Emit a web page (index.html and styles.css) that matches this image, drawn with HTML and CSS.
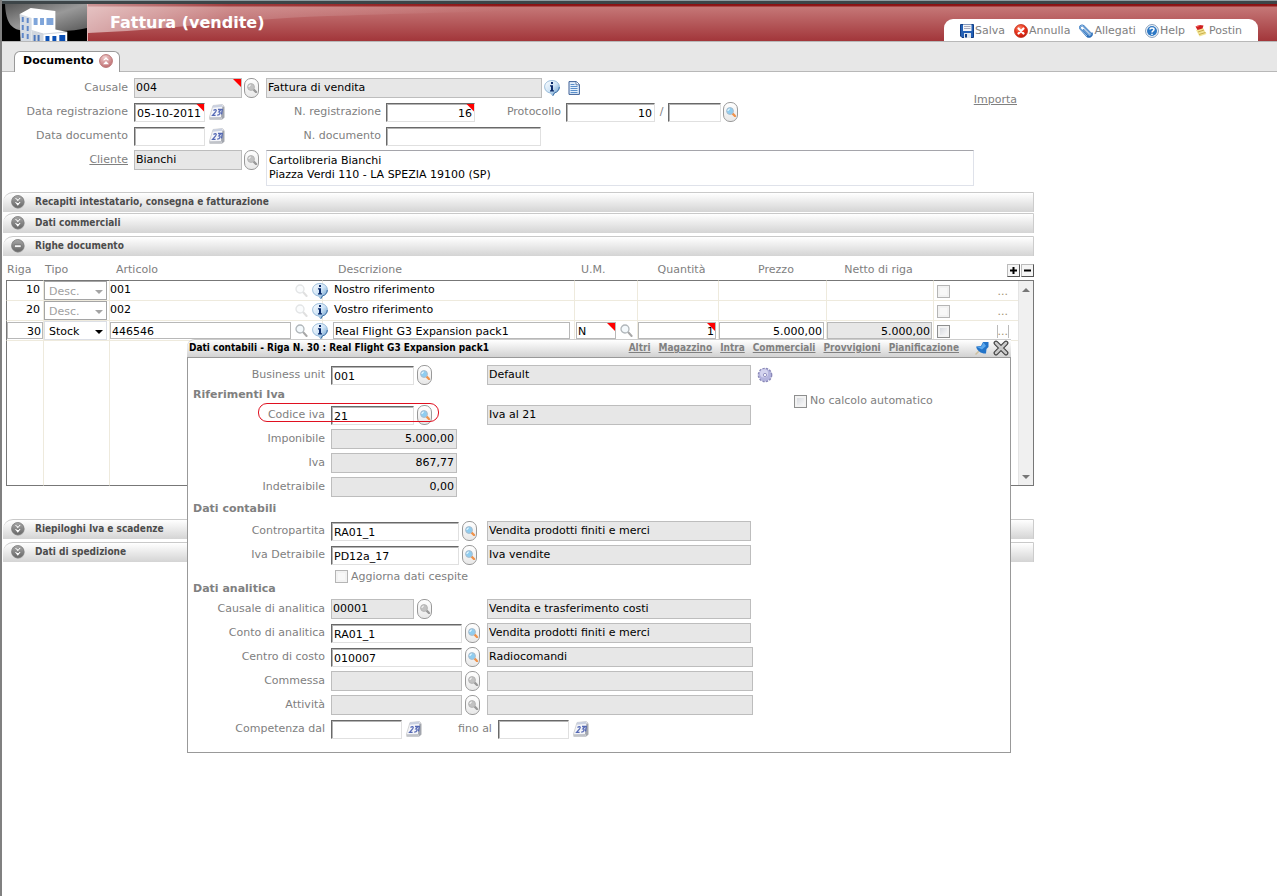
FILE: index.html
```html
<!DOCTYPE html>
<html lang="it">
<head>
<meta charset="utf-8">
<title>Fattura (vendite)</title>
<link rel="stylesheet" href="styles.css">
</head>
<body>
<svg class="sprite" aria-hidden="true">
  <defs>
    <linearGradient id="gInfo" x1="0" y1="0" x2="1" y2="1"><stop offset="0" stop-color="#fff"/><stop offset=".5" stop-color="#cfe4f6"/><stop offset="1" stop-color="#5d95c8"/></linearGradient>
    <linearGradient id="gDisc" x1="0" y1="0" x2="0" y2="1"><stop offset="0" stop-color="#a8a8a8"/><stop offset="1" stop-color="#666"/></linearGradient>
    <radialGradient id="gRed" cx=".4" cy=".3" r=".8"><stop offset="0" stop-color="#ff8a6a"/><stop offset=".5" stop-color="#e8301a"/><stop offset="1" stop-color="#b41408"/></radialGradient>
    <radialGradient id="gRose" cx=".4" cy=".2" r=".9"><stop offset="0" stop-color="#f0cccc"/><stop offset="1" stop-color="#bb6468"/></radialGradient>
  </defs>
  <symbol id="lens" viewBox="0 0 10 10"><path d="M6 6l3 3" stroke="#f0924a" stroke-width="2.4" stroke-linecap="round"/><circle cx="4" cy="4" r="3.4" fill="#8fcdf0" stroke="#a9bccd"/><path d="M2 4a2 2 0 0 1 2-2" stroke="#e6f7ff" stroke-width="1.2" fill="none"/></symbol>
  <symbol id="lens-off" viewBox="0 0 10 10"><path d="M6 6l3 3" stroke="#999" stroke-width="2.4" stroke-linecap="round"/><circle cx="4" cy="4" r="3.4" fill="#c2c2c2" stroke="#b5b5b5"/><path d="M2 4a2 2 0 0 1 2-2" stroke="#f2f2f2" stroke-width="1.2" fill="none"/></symbol>
  <symbol id="find" viewBox="0 0 13 13"><path d="M8 8l3.6 4" stroke="#a8a8a8" stroke-width="2" stroke-linecap="round"/><circle cx="5" cy="5" r="4" fill="#f4f9fc" stroke="#b0b6ba" stroke-width="1.3"/></symbol>
  <symbol id="info" viewBox="0 0 16 16"><path d="M8 .5c4.300 0 7.400 2.700 7.400 6.300 0 3-2 5.300-4.900 6L9 15.700 6.300 13C3 12.500.6 10.100.6 6.800.6 3.200 3.700.5 8 .5z" fill="url(#gInfo)" stroke="#86aed2" stroke-width=".8"/><path d="M15.300 7c0 3-2 5.200-4.800 5.800L9 15.600" fill="none" stroke="#3a6da5" stroke-width="1"/><path d="M7 2h2v2H7zM6 5.200h3v5h1V11.400H6v-1.200h1V6.400H6z" fill="#0b2a6b"/></symbol>
  <symbol id="doc" viewBox="0 0 12 14"><path d="M1 .6h7.500L11.400 3.500v9.900H1z" fill="#e3effb" stroke="#3c5f96"/><path d="M8 .6v3.200h3.400" fill="#fff" stroke="#3c5f96" stroke-width=".8"/><path d="M2.500 3.500h4M2.500 5.500h7M2.500 7.500h7M2.500 9.500h7M2.500 11.500h7" stroke="#5b8fca"/></symbol>
  <symbol id="cal" viewBox="0 0 16 16"><path d="M4 1.500l9.500-1L15 2v11.500L13 15.500H.8L.5 13z" fill="#f4f5f9" stroke="#ccc" stroke-width=".8"/><path d="M13.500 2L15.300 3v10.500L13 15.500l-1-3z" fill="#a2a6ae"/><path d="M.8 15.500L.6 13.300l11.600-.3.600 2.500z" fill="#c0c3c9"/><path d="M4 1.500l9.300-1 .3 2.200-10.200 1z" fill="#c9d0e0"/><path d="M4.500 6.500C6.800 4.600 8 6 6.600 7.800L3.600 11.300h3M9 5.500h3L10 7.800c2 0 1.200 3.300-1.800 3.300M13.400 5l-.9 5.500" fill="none" stroke="#5468b4" stroke-width="1.300"/></symbol>
  <symbol id="open" viewBox="0 0 14 14"><circle cx="7.400" cy="7.600" r="6.200" fill="#bbb"/><circle cx="6.800" cy="6.700" r="6.200" fill="url(#gDisc)" stroke="#777" stroke-width=".8"/><path d="M4 3h1.500v1.200h2.600V3h1.500L6.800 6.300zM4 7h1.500v1h2.600V7h1.500L6.800 10.700z" fill="#fff"/></symbol>
  <symbol id="shut" viewBox="0 0 14 14"><circle cx="7.400" cy="7.600" r="6.200" fill="#bbb"/><circle cx="6.800" cy="6.700" r="6.200" fill="url(#gDisc)" stroke="#777" stroke-width=".8"/><path d="M3.500 6h6.600v2.400H3.500z" fill="#fff" stroke="#555" stroke-width=".5"/></symbol>
  <symbol id="up" viewBox="0 0 14 14"><circle cx="7" cy="7" r="6.400" fill="url(#gRose)" stroke="#b77"/><path d="M7 3l3 3.200H8.500L7 5.200 5.500 6.200H4zM7 7l3 3.200H4z" fill="#fff"/></symbol>
  <symbol id="gear" viewBox="0 0 15 15"><circle cx="7.500" cy="7.500" r="6" fill="#b9b9e0" stroke="#8a88b8" stroke-width="1.800" stroke-dasharray="2.100 1.050"/><circle cx="7.500" cy="7.500" r="5.600" fill="#b4b4de"/><circle cx="6.600" cy="6" r="3.800" fill="#d4d4ef"/><circle cx="7.500" cy="7.500" r="1.500" fill="#fff" stroke="#8886b8" stroke-width=".8"/></symbol>
</svg>

<header class="banner">
  <div class="logo">
    <svg viewBox="0 0 86 37" preserveAspectRatio="none" aria-hidden="true">
      <defs><linearGradient id="gLogo" x1="0" y1="0" x2="1" y2="1"><stop offset="0" stop-color="#555"/><stop offset=".5" stop-color="#999"/><stop offset="1" stop-color="#5a5a5a"/></linearGradient></defs>
      <path d="M0 0h86v37H0z" fill="#000"/>
      <path d="M3 0H86v24c-8 2-17 3-27 3H23C10 26 4 20 3 0z" fill="url(#gLogo)"/>
      <path d="M18 10l11-6 25 3v30H19z" fill="#fff"/><path d="M18 10l12 4v23H19z" fill="#d5dbe3"/>
      <path d="M30 27l12-4 24 5v9H30z" fill="#fff"/><path d="M30 27l12 3v7H30z" fill="#d0d6de"/><path d="M30 26.500L42 30l24-2" fill="none" stroke="#b9c1cc" stroke-width=".7"/>
      <path d="M32 14h4v7h-4zM38.500 14h4v7h-4zM45 14h7v7h-7z" fill="#7fa5da"/>
      <path d="M20 13h2v5h-2zM25 14h2v5h-2zM20 21h2v5h-2zM25 22h2v5h-2zM20 29h2v5h-2zM25 30h2v5h-2z" fill="#5f87c8"/>
      <path d="M44 32h4v5h-4zM51 32h4v5h-4zM58 31h6v6h-6z" fill="#0a4fb5"/><path d="M32 31h2v6h-2zM36 31h2v6h-2z" fill="#4b76bb"/>
    </svg>
  </div>
  <svg class="gloss" viewBox="0 0 1189 37" preserveAspectRatio="none" aria-hidden="true">
    <defs><linearGradient id="gGloss" x1="0" y1="0" x2="1" y2="0"><stop offset="0" stop-color="#fff" stop-opacity=".55"/><stop offset=".2" stop-color="#fff" stop-opacity=".18"/><stop offset=".6" stop-color="#fff" stop-opacity="0"/></linearGradient></defs>
    <path d="M0 0H700C480 6 350 8 240 12 150 15 70 27 0 29z" fill="url(#gGloss)"/>
  </svg>
  <h1>Fattura (vendite)</h1>
  <nav class="tools">
    <a href="#"><svg viewBox="0 0 14 14"><path d="M.5.500h13v13H2l-1.500-1.500z" fill="#2460b5" stroke="#123f86"/><path d="M3 .5h8.500v6.500H3z" fill="#f2f4f7"/><path d="M4 2.500h6.500M4 4.500h6.500" stroke="#aab"/><path d="M4 9h7v5H4z" fill="#dfe6ee"/><path d="M5 10h2v3.500H5z" fill="#123f86"/></svg>Salva</a>
    <a href="#"><svg viewBox="0 0 14 14"><circle cx="7" cy="7" r="6.500" fill="url(#gRed)" stroke="#c2321c" stroke-width=".8"/><path d="M4.500 4.500l5 5M9.500 4.500l-5 5" stroke="#fff" stroke-width="2.200" stroke-linecap="round"/></svg>Annulla</a>
    <a href="#"><svg viewBox="0 0 14 14"><path d="M4 5.500l5.500 5.500c1.500 1.300 3.200-.4 2-1.900L4.500 2C2.500.4-.2 3 1.500 5l6.500 7c2.500 2.300 6-.6 4.600-3.200" fill="none" stroke="#2f6fb8" stroke-width="1.800"/><path d="M4 5.500l5.500 5.500c1.500 1.300 3.200-.4 2-1.900L4.500 2C2.500.4-.2 3 1.500 5l6.500 7" fill="none" stroke="#a5cdf0" stroke-width=".9"/></svg>Allegati</a>
    <a href="#"><svg viewBox="0 0 14 14"><circle cx="7" cy="7" r="6.400" fill="#fff" stroke="#7d98b8"/><circle cx="7" cy="7" r="5" fill="#2d78c4"/><path d="M5 5.500C5 3.400 9 3.400 9 5.500 9 7 7 6.800 7 8.500M7 9.700v1.200" stroke="#fff" stroke-width="1.500" fill="none"/></svg>Help</a>
    <a href="#"><svg viewBox="0 0 14 14"><path d="M2 6l7-2 3.500 6-7 2.500z" fill="#f3e596"/><path d="M4 8l6-2M5 10.500l6.500-2" stroke="#c9ac4c"/><path d="M1.500 2.500l4-1.500 4 .5-1 3-5 1.500z" fill="#cf1f1f"/><path d="M2.500 2.500l3-1" stroke="#f77"/></svg>Postin</a>
  </nav>
</header>

<div class="tabs"><button class="tab" type="button">Documento <svg class="i14"><use href="#up"/></svg></button></div>

<main>
  <form class="doc">
    <div class="line">
      <label class="lab" for="causale">Causale</label>
      <span class="req w108"><input id="causale" class="ro" readonly value="004"></span>
      <button class="look" type="button" aria-label="Cerca causale"><svg><use href="#lens-off"/></svg></button>
      <input class="ro desc276" readonly aria-label="Descrizione causale" value="Fattura di vendita">
      <button class="ico" type="button" aria-label="Informazioni"><svg class="i16"><use href="#info"/></svg></button>
      <button class="ico sheet" type="button" aria-label="Dettagli"><svg class="i14"><use href="#doc"/></svg></button>
    </div>
    <a class="import" href="#">Importa</a>
    <div class="line">
      <label class="lab" for="dreg">Data registrazione</label>
      <span class="req w71"><input id="dreg" value="05-10-2011"></span>
      <button class="ico cal" type="button" aria-label="Calendario"><svg class="i16"><use href="#cal"/></svg></button>
      <label class="lab lab2" for="nreg">N. registrazione</label>
      <span class="req w89"><input id="nreg" class="num" value="16"></span>
      <label class="lab lab3" for="prot">Protocollo</label>
      <input id="prot" class="num w89" value="10">
      <span class="slash">/</span>
      <input class="w53" aria-label="Serie protocollo">
      <button class="look" type="button" aria-label="Cerca protocollo"><svg><use href="#lens"/></svg></button>
    </div>
    <div class="line">
      <label class="lab" for="ddoc">Data documento</label>
      <input id="ddoc" class="w71">
      <button class="ico cal" type="button" aria-label="Calendario"><svg class="i16"><use href="#cal"/></svg></button>
      <label class="lab lab2" for="ndoc">N. documento</label>
      <input id="ndoc" class="w155">
    </div>
    <div class="line tall">
      <a class="lab" href="#">Cliente</a>
      <input class="ro w108" readonly aria-label="Cliente" value="Bianchi">
      <button class="look" type="button" aria-label="Cerca cliente"><svg><use href="#lens-off"/></svg></button>
      <textarea aria-label="Indirizzo cliente" rows="2">Cartolibreria Bianchi
Piazza Verdi 110 - LA SPEZIA 19100 (SP)</textarea>
    </div>
  </form>

  <button class="bar" type="button"><svg class="i14"><use href="#open"/></svg>Recapiti intestatario, consegna e fatturazione</button>
  <button class="bar" type="button"><svg class="i14"><use href="#open"/></svg>Dati commerciali</button>
  <button class="bar spaced" type="button"><svg class="i14"><use href="#shut"/></svg>Righe documento</button>

  <div class="rows">
    <table>
      <colgroup><col class="c38"><col class="c66"><col class="c213"><col class="c252"><col class="c63"><col class="c81"><col class="c108"><col class="c107"><col class="c84"><col class="c16"></colgroup>
      <thead><tr>
        <th>Riga</th><th>Tipo</th><th class="in6">Articolo</th><th class="in15">Descrizione</th><th class="in6">U.M.</th><th class="mid">Quantità</th><th class="mid">Prezzo</th><th class="mid net">Netto di riga</th>
        <th colspan="2"><div class="pm"><button type="button" aria-label="Aggiungi riga"><svg viewBox="0 0 9 9"><path d="M4.500 1v7M1 4.500h7" stroke="#000" stroke-width="2"/></svg></button><button type="button" aria-label="Elimina riga"><svg viewBox="0 0 9 9"><path d="M1 4.500h7" stroke="#000" stroke-width="2"/></svg></button></div></th>
      </tr></thead>
      <tbody>
        <tr>
          <td class="r">10</td>
          <td><span class="sel off"><select disabled aria-label="Tipo riga 10"><option>Desc.</option></select></span></td>
          <td><div class="art"><span>001</span><svg class="find dim"><use href="#find"/></svg><svg class="i16"><use href="#info"/></svg></div></td>
          <td class="t">Nostro riferimento</td><td></td><td></td><td></td><td></td>
          <td class="noline"><div class="end"><input type="checkbox" disabled aria-label="Riga 10"><a href="#">...</a></div></td>
          <td class="scroll" rowspan="4"><div class="track"><i class="au"></i><i class="ad"></i></div></td>
        </tr>
        <tr>
          <td class="r">20</td>
          <td><span class="sel off"><select disabled aria-label="Tipo riga 20"><option>Desc.</option></select></span></td>
          <td><div class="art"><span>002</span><svg class="find dim"><use href="#find"/></svg><svg class="i16"><use href="#info"/></svg></div></td>
          <td class="t">Vostro riferimento</td><td></td><td></td><td></td><td></td>
          <td class="noline"><div class="end"><input type="checkbox" disabled aria-label="Riga 20"><a href="#">...</a></div></td>
        </tr>
        <tr>
          <td><input class="cell num" aria-label="Riga" value="30"></td>
          <td><span class="sel"><select aria-label="Tipo riga 30"><option>Stock</option></select></span></td>
          <td><div class="art"><input class="cell" aria-label="Articolo" value="446546"><svg class="find"><use href="#find"/></svg><svg class="i16"><use href="#info"/></svg></div></td>
          <td><div class="dsc"><input class="cell" aria-label="Descrizione" value="Real Flight G3 Expansion pack1"></div></td>
          <td><div class="um"><span class="req"><input class="cell" aria-label="U.M." value="N"></span><svg class="find"><use href="#find"/></svg></div></td>
          <td><span class="req qty"><input class="cell num" aria-label="Quantità" value="1"></span></td>
          <td><input class="cell num short" aria-label="Prezzo" value="5.000,00"></td>
          <td><input class="cell num short grey" readonly aria-label="Netto di riga" value="5.000,00"></td>
          <td class="noline"><div class="end"><input type="checkbox" aria-label="Riga 30"><a class="boxed" href="#">...</a></div></td>
        </tr>
        <tr class="fill"><td></td><td></td><td></td><td></td><td></td><td></td><td></td><td></td><td class="noline"></td></tr>
      </tbody>
    </table>

    <section class="popup" role="dialog" aria-labelledby="ptitle">
      <div class="ptop">
        <h2 id="ptitle">Dati contabili - Riga N. 30 : Real Flight G3 Expansion pack1</h2>
        <nav><a href="#">Altri</a><a href="#">Magazzino</a><a href="#">Intra</a><a href="#">Commerciali</a><a href="#">Provvigioni</a><a href="#">Pianificazione</a></nav>
        <button class="ico" type="button" aria-label="Blocca"><svg class="i14" viewBox="0 0 14 14"><path d="M4 10l-3.500 3.500" stroke="#cbbf9f" stroke-width="1.500"/><path d="M8 1L13.500 1 13.500 6l-2 2-.5 4.500C7 13 1.500 10 1.200 5.500L6 5z" fill="#2273c8"/><path d="M8.500 1.500L11 5 7 8.500 2 6l4.500-.5z" fill="#5aa8ee"/></svg></button>
        <button class="ico" type="button" aria-label="Chiudi"><svg class="i16" viewBox="0 0 16 16"><path d="M3 3l10 10M13 3L3 13" stroke="#444" stroke-width="4.800" stroke-linecap="round"/><path d="M3 3l10 10M13 3L3 13" stroke="#c9c9c9" stroke-width="2.500" stroke-linecap="round"/></svg></button>
      </div>
      <form class="pbody">
        <div class="prow"><label for="bu">Business unit</label><div class="f"><input id="bu" class="w83" value="001"><button class="look" type="button" aria-label="Cerca"><svg><use href="#lens"/></svg></button></div><input class="ro" readonly aria-label="Descrizione business unit" value="Default"><button class="ico" type="button" aria-label="Impostazioni"><svg class="i16"><use href="#gear"/></svg></button></div>
        <div class="phead"><h3>Riferimenti Iva</h3><label class="auto"><input type="checkbox">No calcolo automatico</label></div>
        <div class="prow marked"><label for="iva">Codice iva</label><div class="f"><input id="iva" class="w83" value="21"><button class="look" type="button" aria-label="Cerca"><svg><use href="#lens"/></svg></button></div><input class="ro" readonly aria-label="Descrizione iva" value="Iva al 21"><i class="ring"></i></div>
        <div class="prow"><label for="imp">Imponibile</label><div class="f"><input id="imp" class="ro num w126" readonly value="5.000,00"></div></div>
        <div class="prow"><label for="impiva">Iva</label><div class="f"><input id="impiva" class="ro num w126" readonly value="867,77"></div></div>
        <div class="prow"><label for="ind">Indetraibile</label><div class="f"><input id="ind" class="ro num w126" readonly value="0,00"></div></div>
        <div class="phead high"><h3>Dati contabili</h3></div>
        <div class="prow"><label for="cp">Contropartita</label><div class="f"><input id="cp" class="w128" value="RA01_1"><button class="look" type="button" aria-label="Cerca"><svg><use href="#lens"/></svg></button></div><input class="ro" readonly aria-label="Descrizione contropartita" value="Vendita prodotti finiti e merci"></div>
        <div class="prow"><label for="idet">Iva Detraibile</label><div class="f"><input id="idet" class="w128" value="PD12a_17"><button class="look" type="button" aria-label="Cerca"><svg><use href="#lens"/></svg></button></div><input class="ro" readonly aria-label="Descrizione iva detraibile" value="Iva vendite"></div>
        <div class="pcheck"><label><input type="checkbox" disabled>Aggiorna dati cespite</label></div>
        <div class="phead low"><h3>Dati analitica</h3></div>
        <div class="prow"><label for="ca">Causale di analitica</label><div class="f"><input id="ca" class="ro w83" readonly value="00001"><button class="look" type="button" aria-label="Cerca"><svg><use href="#lens-off"/></svg></button></div><input class="ro" readonly aria-label="Descrizione causale analitica" value="Vendita e trasferimento costi"></div>
        <div class="prow"><label for="co">Conto di analitica</label><div class="f"><input id="co" class="w131" value="RA01_1"><button class="look" type="button" aria-label="Cerca"><svg><use href="#lens"/></svg></button></div><input class="ro" readonly aria-label="Descrizione conto" value="Vendita prodotti finiti e merci"></div>
        <div class="prow wide"><label for="cc">Centro di costo</label><div class="f"><input id="cc" class="w131" value="010007"><button class="look" type="button" aria-label="Cerca"><svg><use href="#lens"/></svg></button></div><input class="ro" readonly aria-label="Descrizione centro" value="Radiocomandi"></div>
        <div class="prow wide"><label for="cm">Commessa</label><div class="f"><input id="cm" class="ro w131" readonly><button class="look" type="button" aria-label="Cerca"><svg><use href="#lens-off"/></svg></button></div><input class="ro" readonly aria-label="Descrizione commessa"></div>
        <div class="prow wide"><label for="at">Attività</label><div class="f"><input id="at" class="ro w131" readonly><button class="look" type="button" aria-label="Cerca"><svg><use href="#lens-off"/></svg></button></div><input class="ro" readonly aria-label="Descrizione attività"></div>
        <div class="prow dates"><label for="dal">Competenza dal</label><div class="f"><input id="dal" class="w71"><button class="ico" type="button" aria-label="Calendario"><svg class="i16"><use href="#cal"/></svg></button></div><div class="f to"><label for="al">fino al</label><input id="al" class="w71"><button class="ico" type="button" aria-label="Calendario"><svg class="i16"><use href="#cal"/></svg></button></div></div>
      </form>
    </section>
  </div>

  <button class="bar after" type="button"><svg class="i14"><use href="#open"/></svg>Riepiloghi Iva e scadenze</button>
  <button class="bar spaced" type="button"><svg class="i14"><use href="#open"/></svg>Dati di spedizione</button>
</main>
</body>
</html>
```

FILE: styles.css
```css
* { box-sizing: border-box; }
html { height: 100%; }
body {
  margin: 0;
  min-height: 100%;
  border-left: 2px solid #808080;
  background: #fff;
  color: #808080;
  font: 11px/14px "DejaVu Sans", Verdana, sans-serif;
}
a { color: #808080; }
h1, h2, h3 { margin: 0; }
svg { display: block; flex: none; fill: none; }
.sprite { position: absolute; width: 0; height: 0; }
.i14 { width: 14px; height: 14px; }
.i16 { width: 16px; height: 16px; }
.find { width: 13px; height: 13px; }
.dim { opacity: .35; }

/* controls */
input, select, textarea, button { font: inherit; margin: 0; }
input:not([type="checkbox"]) {
  flex: none;
  min-width: 0;
  height: 19px;
  padding: 2px 2px 0;
  border: 1px solid #e0e0e0;
  border-top-color: #696969;
  border-left-color: #696969;
  box-shadow: inset 1px 1px #b4b4b4;
  background: #fff;
  color: #000;
  border-radius: 0;
  outline: none;
}
input.ro:not([type="checkbox"]) {
  height: 20px;
  padding: 0 2px 1px 1px;
  border: 1px solid #bdbdbd;
  box-shadow: none;
  background: #e7e7e7;
}
input.num:not([type="checkbox"]) { text-align: right; }
input[type="checkbox"] {
  appearance: none;
  flex: none;
  width: 13px;
  height: 13px;
  border: 1px solid #8e8f8f;
  background: linear-gradient(135deg, #cfd2d8, #fff);
  box-shadow: inset 0 0 0 2px #f2f2f2;
}
input[type="checkbox"]:disabled { border-color: #b5b5b5; background: #f8f8f8; }
textarea {
  flex: none;
  width: 708px;
  height: 36px;
  padding: 3px 2px;
  border: 1px solid #dfe2ea;
  border-top-color: #a5a5ab;
  border-radius: 0;
  color: #000;
  resize: none;
  overflow: hidden;
}
button { padding: 0; border: 0; background: none; color: inherit; }
.look {
  flex: none;
  display: flex;
  align-items: center;
  justify-content: center;
  width: 15px;
  height: 20px;
  border: 1px solid #999;
  border-radius: 7px;
  background: linear-gradient(#fff, #e8e8e8);
}
.look svg { width: 10px; height: 10px; }
.ico { flex: none; }
.req { position: relative; flex: none; display: block; }
.req input:not([type="checkbox"]) { width: 100%; display: block; }
.req::after {
  content: "";
  position: absolute;
  top: 1px;
  right: 1px;
  width: 8px;
  height: 8px;
  background: #f00;
  clip-path: polygon(0 0, 100% 0, 100% 100%);
}
.w53 { width: 53px; }
.w71 { width: 71px; }
.w83 { width: 83px; }
.w89 { width: 89px; }
.w108 { width: 108px; }
.w126 { width: 126px; }
.w128 { width: 128px; }
.w131 { width: 131px; }
.w155 { width: 155px; }
.desc276 { width: 276px; margin-left: 5px; }

/* banner */
.banner {
  position: relative;
  display: flex;
  height: 42px;
  margin-left: -2px;
  padding-left: 2px;
  border-top: 4px solid #3d4548;
  border-bottom: 1px solid #b8b8b8;
  background: linear-gradient(#8a0f10 0, #8f1a1b 2px, #c57777 3px, #a2363a 100%);
}
.banner::before {
  content: "";
  position: absolute;
  left: 0;
  right: 0;
  top: -4px;
  height: 1px;
  background: #8f9da2;
}
.logo { flex: none; width: 86px; border-right: 1px solid #e3b7b7; }
.logo svg { width: 100%; height: 37px; }
.gloss { position: absolute; left: 88px; top: 0; width: calc(100% - 88px); height: 37px; }
.banner h1 {
  position: relative;
  flex: 1;
  padding: 9px 0 0 22px;
  color: #fff;
  font-size: 16px;
  line-height: 20px;
}
.tools {
  position: relative;
  align-self: flex-end;
  display: flex;
  align-items: center;
  gap: 9px;
  height: 22px;
  margin-right: 19px;
  padding: 2px 16px 0;
  border-radius: 9px 9px 0 0;
  background: #fff;
}
.tools a { display: flex; align-items: center; gap: 1px; text-decoration: none; }
.tools svg { width: 14px; height: 14px; }

.tabs {
  display: flex;
  height: 30px;
  padding: 9px 0 0 12px;
  background: #e7e7e7;
  border-bottom: 1px solid #b8b8b8;
}
.tab {
  display: flex;
  align-items: center;
  gap: 5px;
  height: 21px;
  padding: 0 6px 2px 8px;
  border: 1px solid #999;
  border-bottom: 0;
  border-radius: 6px 6px 0 0;
  background: #fff;
  color: #000;
  font-weight: bold;
}

/* document header form */
main { max-width: 1032px; }
.doc {
  display: grid;
  grid-template-columns: 1fr auto;
  grid-template-rows: 24px 24px 24px 38px;
  padding: 4px 17px 0 0;
  margin-bottom: 6px;
}
.line { grid-column: 1; display: flex; align-items: center; gap: 2px; }
.line .lab { width: 126px; margin-right: 4px; text-align: right; flex: none; white-space: nowrap; }
.line .lab2 { width: 154px; margin-right: 3px; }
.line .lab3 { width: 84px; margin-right: 3px; }
.tall { grid-column: 1 / -1; align-items: flex-start; padding-top: 2px; }
.tall .lab { padding-top: 3px; }
.tall textarea { margin-left: 5px; }
.import { grid-column: 2; grid-row: 1 / 3; align-self: center; }
.sheet { margin-left: 5px; }
.cal { margin-left: 2px; }
.slash { width: 9px; text-align: center; }

/* section bars */
.bar {
  display: flex;
  align-items: center;
  gap: 10px;
  width: calc(100% - 1px);
  height: 20px;
  margin: 1px 0 0 1px;
  padding: 0 0 1px 8px;
  border-top: 1px solid #c9c9c9;
  border-right: 1px solid #ccc;
  border-radius: 10px 0 0 0;
  background: linear-gradient(#fff, #f0f0f0 35%, #d4d4d4);
  color: #4c4c4c;
  font: bold 10px/12px "DejaVu Sans Condensed", Tahoma, sans-serif;
}
.bar.spaced { margin-top: 3px; }
.bar.after { margin-top: 33px; }

/* document lines */
.rows { position: relative; padding-left: 4px; }
table { width: 100%; table-layout: fixed; border-collapse: separate; border-spacing: 0; }
.c16 { width: 16px; }
.c38 { width: 38px; }
.c63 { width: 63px; }
.c66 { width: 66px; }
.c81 { width: 81px; }
.c84 { width: 84px; }
.c107 { width: 107px; }
.c108 { width: 108px; }
.c213 { width: 213px; }
th { height: 24px; padding: 4px 0 0 1px; font-weight: normal; text-align: left; white-space: nowrap; }
th.in6 { padding-left: 6px; }
th.in15 { padding-left: 15px; }
th.mid { padding-left: 6px; text-align: center; }
th.net { padding: 4px 4px 0 0; }
.pm { display: flex; justify-content: flex-end; gap: 1px; }
.pm button { width: 13px; height: 13px; border: 1px solid #bbb; border-right-color: #555; border-bottom-color: #555; background: #f5f5f5; padding: 1px; }
.pm svg { width: 9px; height: 9px; }
td { height: 20px; padding: 0; color: #000; border-right: 1px solid #eeeadd; border-bottom: 1px solid #eeeadd; vertical-align: middle; white-space: nowrap; }
tbody tr:first-child td { height: 21px; border-top: 1px solid #777; }
tbody td:first-child { border-left: 1px solid #777; }
tr.fill td { height: 145px; border-bottom: 1px solid #777; }
td.noline { border-right: 0; }
td.r { padding: 0 3px 2px 0; text-align: right; }
td.t { padding: 0 0 2px 11px; }
.sel { position: relative; display: block; width: 63px; height: 19px; }
.sel select {
  appearance: none;
  display: block;
  width: 100%;
  height: 100%;
  padding: 2px 16px 0 4px;
  border: 1px solid #dcdfe6;
  border-radius: 0;
  background: #fff;
  color: #000;
}
.sel::after {
  content: "";
  position: absolute;
  right: 4px;
  top: 9px;
  border: 4px solid transparent;
  border-top-color: #000;
  border-bottom: 0;
}
.sel.off select { border-color: #a5a5a5; color: #a0a0a0; opacity: 1; }
.sel.off::after { border-top-color: #a5a5a5; }
.art { display: flex; align-items: center; gap: 4px; margin-right: -6px; }
.art span, .art .cell { flex: 1; }
.art span { padding-bottom: 2px; }
input.cell:not([type="checkbox"]) { width: 100%; height: 17px; padding: 1px 1px 0; border: 1px solid #b8b8b8; box-shadow: none; }
input.cell.short:not([type="checkbox"]) { width: 105px; }
input.cell.grey:not([type="checkbox"]) { background: #e7e7e7; }
.dsc { padding: 0 4px 0 10px; }
.um { display: flex; gap: 4px; align-items: center; padding: 0 4px 0 1px; }
.um .req { flex: 1; }
.qty { margin-right: 2px; }
.end { display: flex; justify-content: space-between; padding: 2px 9px 0 3px; }
.end a { color: #a09070; text-decoration: none; padding: 0 1px; line-height: 13px; }
.end .boxed { border-left: 1px solid #bbb; border-right: 1px solid #bbb; padding: 0; }
td.scroll { border-right-color: #777; border-bottom-color: #777; vertical-align: top; }
.track { display: flex; flex-direction: column; justify-content: space-between; align-items: center; height: 204px; padding: 7px 0 6px; background: #f0f0f0; border-left: 1px solid #e4e4e4; }
.au, .ad { border: 4px solid transparent; }
.au { border-top: 0; border-bottom-color: #777; }
.ad { border-bottom: 0; border-top-color: #777; }

/* accounting popup */
.popup { position: absolute; left: 185px; top: 83px; width: 824px; z-index: 2; }
.ptop {
  display: flex;
  align-items: center;
  gap: 4px;
  height: 18px;
  padding: 0 2px 1px;
  border-top: 1px solid #ccc;
  border-radius: 8px 0 0 0;
  background: linear-gradient(#fff, #d2d2d2);
  font: bold 10px/12px "DejaVu Sans Condensed", Tahoma, sans-serif;
}
.ptop h2 { flex: 1; color: #000; font: inherit; white-space: nowrap; }
.ptop nav { display: flex; gap: 8px; margin-right: 12px; }
.pbody { border: 1px solid #999; background: #fff; padding: 5px 0 11px; }
.prow { display: grid; grid-template-columns: 137px 150px 264px auto; column-gap: 6px; align-items: center; justify-content: start; height: 24px; }
.prow.wide { grid-template-columns: 137px 150px 266px; }
.prow > label { text-align: right; white-space: nowrap; }
.prow > .ro { width: 100%; }
.f { display: flex; align-items: center; gap: 3px; }
.marked { position: relative; }
.ring { position: absolute; left: 70px; top: 0; width: 181px; height: 19px; border: 1px solid #e01020; border-radius: 9px; pointer-events: none; }
.phead { display: flex; align-items: center; height: 16px; padding-left: 5px; }
.phead h3 { width: 601px; font-size: 11px; line-height: 14px; }
.phead.high { height: 20px; }
.phead.low { height: 12px; margin-bottom: 2px; }
.auto { display: flex; align-items: center; gap: 3px; padding-top: 12px; }
.pcheck { display: flex; height: 16px; padding: 3px 0 0 147px; }
.pcheck label { display: flex; align-items: center; gap: 3px; }
.prow.dates { grid-template-columns: 137px 121px auto; }
.dates .f { gap: 4px; }
.to label { margin-right: 2px; }
```
